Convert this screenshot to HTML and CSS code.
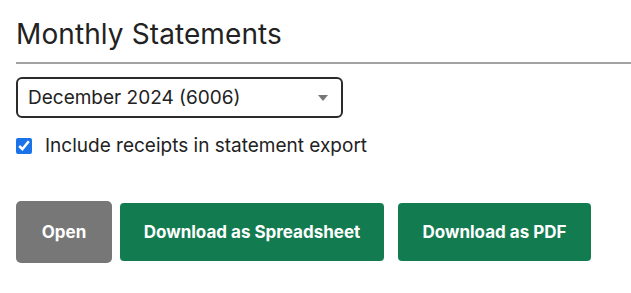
FILE: index.html
```html
<!DOCTYPE html>
<html lang="en">
<head>
  <meta charset="UTF-8" />
  <title>Monthly Statements</title>
  <link rel="stylesheet" href="styles.css">
</head>
<body>
  <section class="statements">
    <h2 class="statements-title">Monthly Statements</h2>
    <div class="select-wrap">
      <select class="month-select" id="statementMonth">
        <option>December 2024 (6006)</option>
        <option>November 2024 (6006)</option>
        <option>October 2024 (6006)</option>
      </select>
      <span class="select-arrow"></span>
    </div>
    <label class="receipts">
      <input type="checkbox" id="includeReceipts" checked>
      <span>Include receipts in statement export</span>
    </label>
    <div class="actions">
      <button class="btn btn-open">Open</button>
      <button class="btn btn-green">Download as Spreadsheet</button>
      <button class="btn btn-green btn-pdf">Download as PDF</button>
    </div>
  </section>
</body>
</html>
```

FILE: styles.css
```css
body {
  font-family: Inter, "Noto Sans", sans-serif;
  color: #222;
  background-color: #fff;
  margin: 0;
  padding: 0;
}
.statements {
  padding: 18px 0 0 16px;
}
.statements-title {
  font-size: 28px;
  font-weight: 400;
  letter-spacing: 0.1px;
  margin: 0;
  padding-bottom: 12px;
  border-bottom: 2px solid #a3a3a3;
  line-height: 32px;
}
.select-wrap {
  position: relative;
  width: 327px;
  margin-top: 13px;
}
.month-select {
  appearance: none;
  -webkit-appearance: none;
  width: 100%;
  height: 41px;
  padding: 0 10px;
  font-family: inherit;
  font-size: 19px;
  color: #222;
  background: #fff;
  border: 2px solid #2b2b2b;
  border-radius: 6px;
}
.select-arrow {
  position: absolute;
  right: 15px;
  top: 18px;
  border-left: 5px solid transparent;
  border-right: 5px solid transparent;
  border-top: 6px solid #777;
}
.receipts {
  display: flex;
  align-items: center;
  gap: 13px;
  margin-top: 16px;
  font-size: 19px;
  color: #222;
}
.receipts input {
  width: 16px;
  height: 16px;
  margin: 0;
  accent-color: #1a73e8;
}
.actions {
  display: flex;
  align-items: center;
  margin-top: 44px;
}
.btn {
  font-family: inherit;
  font-size: 17px;
  font-weight: 700;
  color: #fff;
  border: none;
  border-radius: 4px;
  height: 58px;
  padding: 0 20px;
  cursor: pointer;
}
.btn-open {
  background-color: #777;
  height: 62px;
  width: 96px;
  border-radius: 5px;
  margin-right: 8px;
}
.btn-green {
  background-color: #137b50;
  width: 264px;
}
.btn-pdf {
  width: 193px;
  margin-left: 14px;
}
```
